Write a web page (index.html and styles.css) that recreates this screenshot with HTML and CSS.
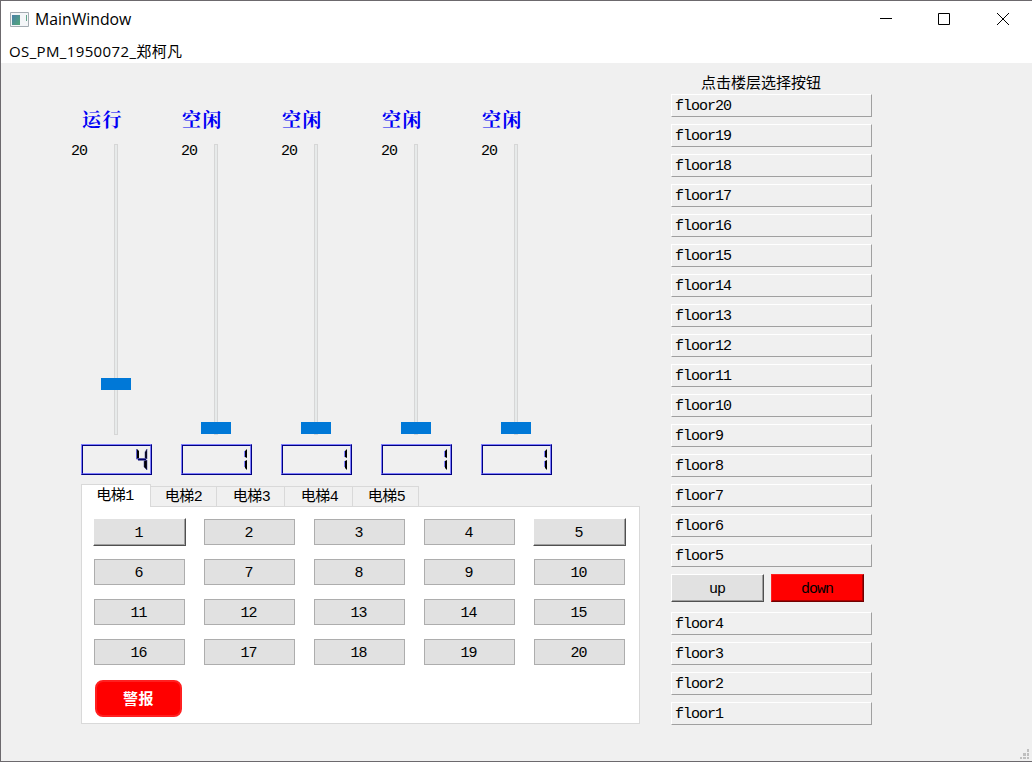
FILE: index.html
```html
<!DOCTYPE html>
<html lang="zh-CN">
<head>
<meta charset="utf-8">
<title>MainWindow</title>
<link rel="stylesheet" href="styles.css">
</head>
<body>
<div class="window">
  <header class="titlebar">
    <svg class="app-icon" width="19" height="16" viewBox="0 0 19 16"><defs><linearGradient id="g" x2="1" y2="1"><stop stop-color="#4a7fa8"/><stop offset="1" stop-color="#52a878"/></linearGradient></defs><path d="M.5.5h18v14H.5z" fill="#f4f6f8" stroke="#a4acb2"/><path d="M2 3h8v10H2z" fill="url(#g)"/><path d="M16.500 3v6" stroke="#62a58a"/></svg>
    <h1 class="title">MainWindow</h1>
    <div class="controls">
      <svg width="12" height="12" viewBox="0 0 12 12"><path d="M0 5.500h12" stroke="#000"/></svg>
      <svg width="12" height="12" viewBox="0 0 12 12"><path d="M.5.5h11v11H.5z" fill="none" stroke="#000"/></svg>
      <svg width="12" height="12" viewBox="0 0 12 12"><path d="M0 0l12 12M12 0L0 12" stroke="#000"/></svg>
    </div>
  </header>
  <nav class="menubar">OS_PM_1950072_郑柯凡</nav>
  <main class="content">
    <section class="left">
      <div class="lifts" id="lifts"></div>
      <div class="tabs">
        <div class="tab active">电梯1</div><div class="tab">电梯2</div><div class="tab t3">电梯3</div><div class="tab t3">电梯4</div><div class="tab">电梯5</div>
      </div>
      <div class="panel">
        <div class="keys" id="keys"></div>
        <button class="alarm">警报</button>
      </div>
    </section>
    <section class="floors">
      <h2 class="hint">点击楼层选择按钮</h2>
      <div class="list" id="upper"></div>
      <div class="calls"><button class="call">up</button><button class="call down">down</button></div>
      <div class="list" id="lower"></div>
    </section>
  </main>
  <svg class="grip" width="9" height="10" viewBox="0 0 9 10"><path d="M7 0h2v3H7zM3 4h3v3H3zM7 4h2v3H7zM0 8h2v2H0zM3 8h3v2H3zM7 8h2v2H7z" fill="#bfbfbf"/></svg>
</div>
<script src="app.js"></script>
</body>
</html>
```
FILE: styles.css
```css
* { box-sizing: border-box; }
body { margin: 0; overflow: hidden; }
.window { position: relative; width: 1032px; height: 762px; background: #f0f0f0; border: 1px solid #6c696d; border-right: 0; font: 15px "Liberation Mono", "Noto Sans CJK SC", monospace; letter-spacing: -1px; color: #000; }
.titlebar { height: 36px; background: #fff; display: flex; align-items: center; padding-left: 9px; }
.app-icon { margin-top: 1px; }
.title { margin: 0 0 0 6px; font: 15.800px "Open Sans", "Noto Sans", sans-serif; letter-spacing: 0; }
.controls { display: flex; gap: 47px; margin-left: auto; padding-right: 23px; }
.controls svg:first-child { margin-right: -1px; }
.menubar { height: 26px; background: #fff; padding-left: 8px; font: 15px/29px "Open Sans", "Noto Sans CJK SC", sans-serif; letter-spacing: .37px; }
.content { display: flex; }
.left { width: 559px; margin-left: 80px; padding-top: 42px; }
.lifts { display: flex; gap: 29px; height: 379px; }
.lift { width: 71px; }
.state { height: 27px; padding-left: 1px; font: bold 19px/27px "Noto Serif CJK SC", "Noto Sans CJK SC", serif; letter-spacing: 1.500px; color: #0000f5; }
.shaft { display: flex; height: 291px; margin-top: 12px; }
.max { width: 33px; line-height: 15px; }
.lift:first-child .max { margin-left: -10px; width: 43px; }
.groove { width: 4px; border: 1px solid #d6d6d6; background: #e7eaea; }
.handle { width: 30px; height: 12px; margin-left: -14px; background: #0078d7; }
.lcd { width: 71px; height: 31px; margin-top: 9px; border: 1px solid; border-color: #7f7fff #000080 #000080 #7f7fff; display: flex; }
.lcd-in { flex: 1; border: 1px solid; border-color: #000080 #7f7fff #7f7fff #000080; display: flex; justify-content: flex-end; padding: 2px 2px 0 0; }
.tabs { display: flex; align-items: flex-end; height: 23px; margin-bottom: -1px; position: relative; }
.tab { width: 66px; height: 20px; margin-bottom: 1px; border: 1px solid #d9d9d9; border-width: 1px 1px 0 0; font: 15px/21px "Liberation Mono", "Noto Sans CJK SC", monospace; letter-spacing: -.5px; text-align: center; }
.tab.t3 { width: 68px; }
.tab.t3, .tab:last-child { padding-left: 2px; }
.tab.active { width: 70px; height: 23px; margin-bottom: 0; border-left-width: 1px; background: #fff; line-height: 23px; padding-right: 2px; }
.panel { height: 218px; background: #fff; border: 1px solid #d9d9d9; padding: 11px; }
.keys { display: grid; grid-template-columns: repeat(5, 93px); grid-auto-rows: 28px; column-gap: 17px; row-gap: 12px; }
button { font: inherit; letter-spacing: inherit; color: #000; padding: 0; }
.key { margin: 1px; padding: 2px 2px 0 0; border: 1px solid #adadad; background: #e1e1e1; }
.key.lit, .call { margin: 0; border: 1px solid; border-color: #fff #505050 #505050 #fff; background: #e1e1e1; box-shadow: inset -1px -1px #a0a0a0; }
.alarm { display: block; width: 87px; height: 37px; margin: 14px 0 0 2px; padding-bottom: 2px; border: 2px solid #ff2020; border-radius: 8px; background: #f00; color: #fff; font: bold 15px "Noto Sans CJK SC", sans-serif; letter-spacing: .5px; }
.floors { width: 201px; margin-left: 31px; padding-top: 8px; }
.hint { height: 23px; margin: 0; font: 15px/21px "Noto Sans CJK SC", sans-serif; letter-spacing: 0; padding-left: 30px; white-space: nowrap; }
.list { display: grid; gap: 7px; }
.floor { height: 23px; border: 1px solid; border-color: #fff #a0a0a0 #a0a0a0 #fff; padding-left: 3px; line-height: 24px; }
.calls { display: flex; gap: 7px; margin: 7px 0 10px; }
.call { width: 93px; height: 28px; padding: 3px 1px 0 0; }
.call.down { background: #f00; border-color: #ff2020 #700000 #700000 #ff2020; box-shadow: inset -1px -1px #b00000; }
.grip { position: absolute; right: 3px; bottom: 2px; }
```
FILE: app.js
```js
const four = '<svg width="12" height="23" viewBox="0 0 12 23"><path d="M1 1v10l2-1V3z" fill="#000"/><path d="M.5 1v10h9" fill="none" stroke="#5c5cc8"/><path d="M2 11.500h8" stroke="#00006a" stroke-width="2"/><path d="M11 1v10l-2-1V4zM11 12v10l-3-3v-6z" fill="#000" stroke="#30309a" stroke-width=".5"/></svg>';
const one = '<svg width="4" height="23" viewBox="0 0 4 23"><path d="M3 1v9l-2-1V3zM3 12v10l-2-2v-7z" fill="#000"/><path d="M.5 3v6M.5 13v6" stroke="#7f7fff"/></svg>';
document.getElementById('lifts').innerHTML = [4, 1, 1, 1, 1].map((n, i) => `
  <div class="lift"><div class="state">${i ? '空闲' : '运行'}</div>
  <div class="shaft"><span class="max">20</span><div class="groove"><div class="handle" style="margin-top:${n === 4 ? 233 : 277}px"></div></div></div>
  <div class="lcd"><div class="lcd-in">${n === 4 ? four : one}</div></div></div>`).join('');
document.getElementById('keys').innerHTML = Array.from({ length: 20 }, (_, i) =>
  `<button class="key${i === 0 || i === 4 ? ' lit' : ''}">${i + 1}</button>`).join('');
const rows = (from, to) => {
  let s = '';
  for (let n = from; n >= to; n--) s += `<div class="floor">floor${n}</div>`;
  return s;
};
document.getElementById('upper').innerHTML = rows(20, 5);
document.getElementById('lower').innerHTML = rows(4, 1);
```
